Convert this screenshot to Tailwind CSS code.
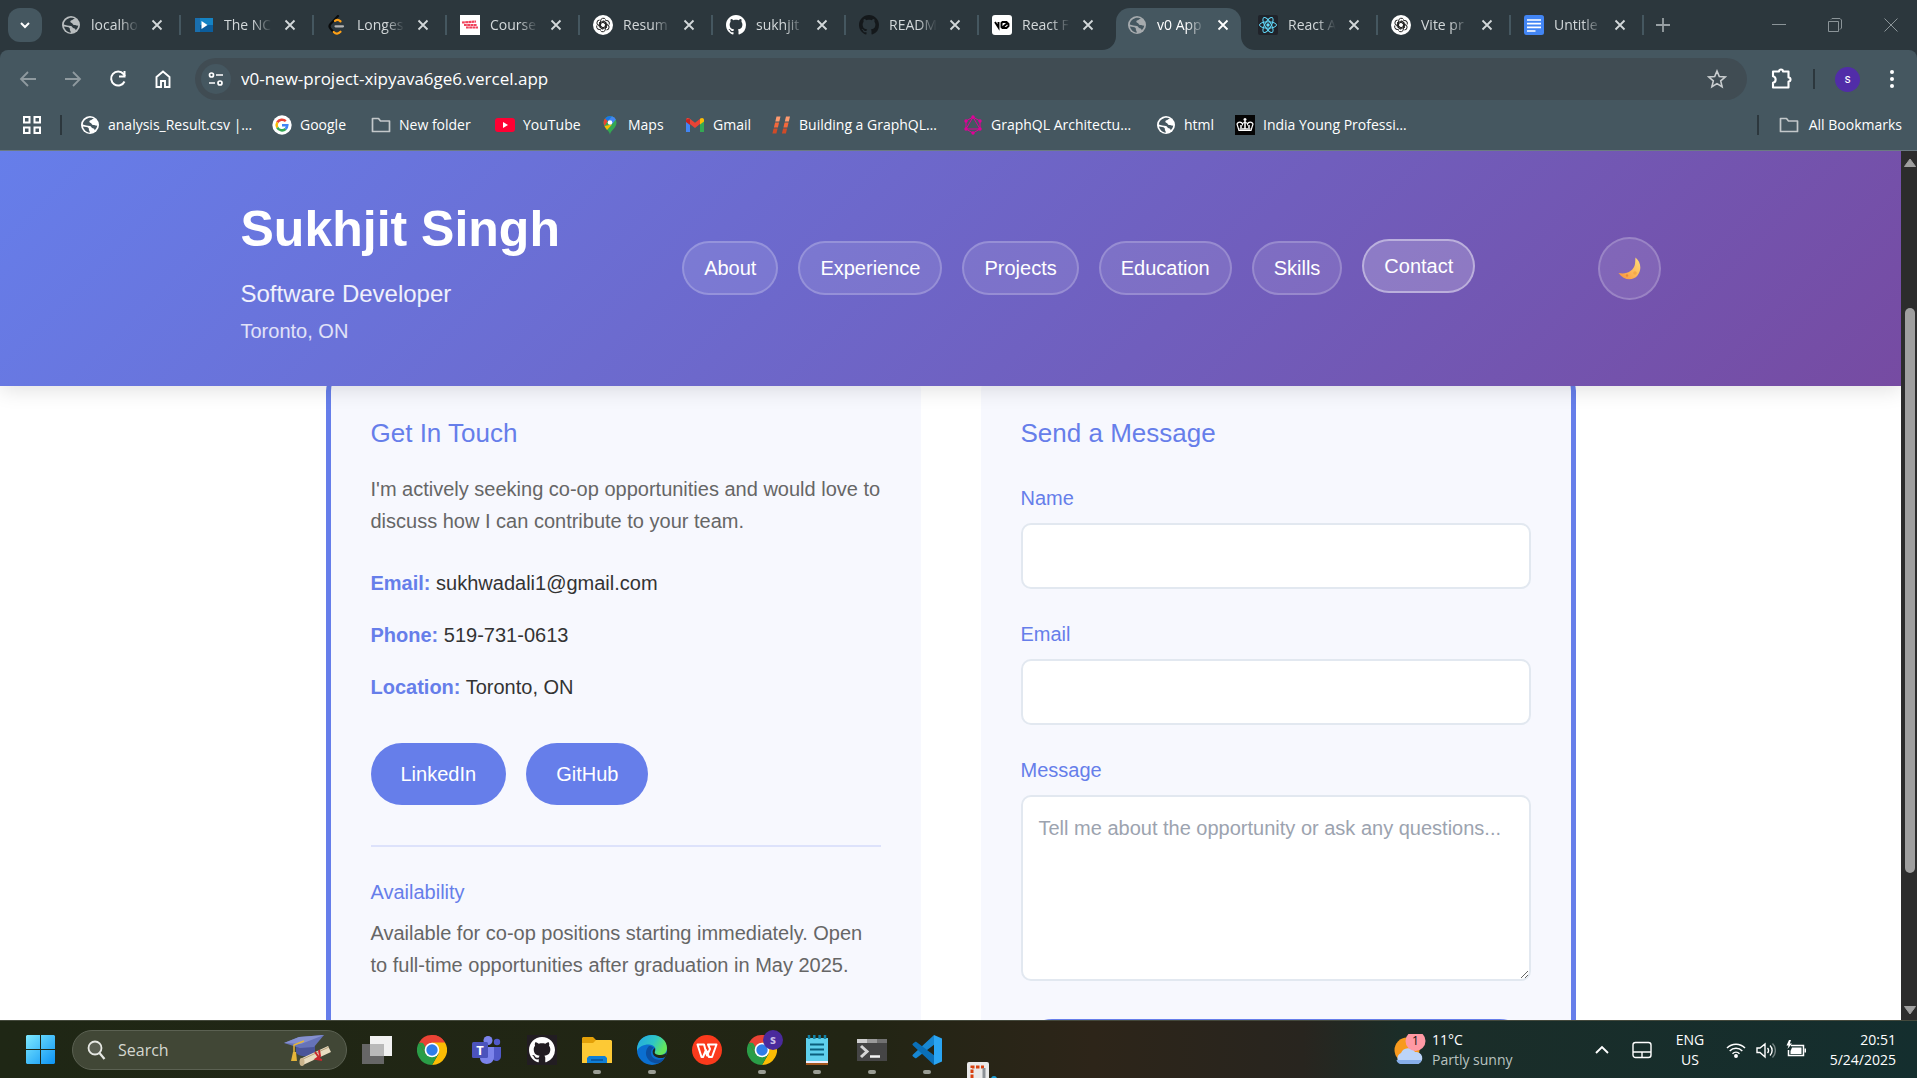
<!DOCTYPE html>
<html lang="en">
<head>
<meta charset="utf-8">
<title>v0 App</title>
<script src="https://cdn.jsdelivr.net/npm/@tailwindcss/browser@4"></script>
</head>
<body class="flex h-screen flex-col overflow-hidden bg-white font-['Liberation_Sans',Arial,sans-serif] text-xl leading-8 text-[#333]">

<svg class="hidden" aria-hidden="true">
  <defs>
    <symbol id="globe" viewBox="0 0 20 20"><circle cx="10" cy="10" r="9" fill="currentColor"/><path d="M8 3.200c1.500-.6 4.500-.5 5.800.5-1.800.2-2 1.300-3.300 1.600-1.600.4-1.400 2-.3 2.400 1.800.6 1.200 2.300 3 2.300 1.700 0 2.200 1 4 .6-.2 2-1.300 3.600-2.500 4.700-.2-1.300-.7-2-2-2.100-1.500-.1-1-2-2.700-2.200-2.200-.2-5.200-.6-7.200-1.500.1-2.900 2-5.200 5.200-6.300z" fill="var(--land)"/><path d="M3 11.500c2 .4 4.500.3 5.500 1.500s-.3 2 1 3l.3 1.700C6.500 17.500 3.600 14.800 3 11.500z" fill="var(--land)"/></symbol>
    <symbol id="github" viewBox="0 0 16 16"><path fill="currentColor" d="M8 0C3.580 0 0 3.580 0 8c0 3.540 2.290 6.530 5.470 7.590.4.070.55-.17.55-.38 0-.19-.01-.82-.01-1.490-2.010.37-2.530-.49-2.690-.94-.09-.23-.48-.94-.82-1.130-.28-.15-.68-.52-.01-.53.63-.01 1.080.58 1.230.82.72 1.210 1.870.87 2.330.66.07-.52.28-.87.51-1.070-1.780-.2-3.640-.89-3.640-3.950 0-.87.31-1.590.82-2.150-.08-.2-.36-1.020.08-2.120 0 0 .67-.21 2.200.82.64-.18 1.320-.27 2-.27s1.360.09 2 .27c1.530-1.040 2.200-.82 2.200-.82.44 1.100.16 1.920.08 2.120.51.56.82 1.270.82 2.150 0 3.070-1.870 3.750-3.650 3.950.29.25.54.73.54 1.480 0 1.070-.01 1.930-.01 2.200 0 .21.15.46.55.38A8.010 8.010 0 0 0 16 8c0-4.420-3.580-8-8-8z"/></symbol>
    <symbol id="openai" viewBox="0 0 20 20"><circle cx="10" cy="10" r="10" fill="#fff"/><g fill="none" stroke="#222" stroke-width="1"><g id="petal"><path d="M7.600 10V5.900a2.700 2.700 0 0 1 5-1.400M7.600 8.600 11 6.600l3.200 1.900"/></g><use href="#petal" transform="rotate(60 10 10)"/><use href="#petal" transform="rotate(120 10 10)"/><use href="#petal" transform="rotate(180 10 10)"/><use href="#petal" transform="rotate(240 10 10)"/><use href="#petal" transform="rotate(300 10 10)"/></g></symbol>
    <symbol id="x" viewBox="0 0 12 12"><path d="M1.500 1.500l9 9M10.500 1.500l-9 9" stroke="currentColor" stroke-width="1.800"/></symbol>
    <symbol id="folder" viewBox="0 0 20 20"><path d="M1.500 3.500h6l2 2.500h9v10.500h-17z" fill="none" stroke="#c3c8ca" stroke-width="1.700" stroke-linejoin="round"/></symbol>
    <symbol id="chrome" viewBox="0 0 30 30"><path d="M15 15 2 7.500A15 15 0 0 1 28 7.500z" fill="#ea4335"/><path d="M15 0A15 15 0 0 1 28 7.500H15z" fill="#ea4335"/><path d="M28 7.500A15 15 0 0 1 15 30l6.500-11.200L15 7.500z" fill="#fbbc04"/><path d="M2 7.500A15 15 0 0 0 15 30l6.500-11.200L15 15l-6.500 3.800z" fill="#2a9d47"/><path d="M2 7.500 8.500 18.800 15 15V7.500z" fill="#ea4335"/><path d="M2 7.500 8.500 18.800 11 16 6 8z" fill="#2a9d47"/><circle cx="15" cy="15" r="7.300" fill="#fff"/><circle cx="15" cy="15" r="5.700" fill="#2f7de9"/></symbol>
  </defs>
</svg>

<!-- Browser chrome -->
<header class="shrink-0 bg-[#2c373d] font-['Open_Sans','Noto_Sans',sans-serif] text-sm text-[#d3d8da]">
  <div class="flex h-[50px] items-end pl-2">
    <button aria-label="Search tabs" class="mr-1.5 mb-2 flex size-[34px] items-center justify-center rounded-xl bg-[#455760] text-white"><svg class="size-3" viewBox="0 0 12 12"><path d="M2 4l4 4 4-4" fill="none" stroke="currentColor" stroke-width="2"/></svg></button>
    <nav aria-label="Open tabs" class="flex">
      <div class="flex h-[42px] w-[133px] items-center pb-2 pl-[13px]"><svg class="size-5 shrink-0 text-[#b9bdbf] [--land:#2c373d]"><use href="#globe"/></svg><a href="#" class="ml-2.5 w-12 whitespace-nowrap [mask-image:linear-gradient(to_right,#000_60%,transparent)]">localho</a><button aria-label="Close tab" class="ml-3"><svg class="size-3"><use href="#x"/></svg></button><span class="ml-auto h-5 w-0.5 bg-[#455760]"></span></div>
      <div class="flex h-[42px] w-[133px] items-center pb-2 pl-[13px]"><svg class="size-5 shrink-0" viewBox="0 0 20 20"><path d="M1 3h18v14H1z" fill="#1583c4"/><path d="M1 10h18v7H1z" fill="#0b5d9c"/><path d="M1 3h5v14H1z" fill="#1a6fae"/><path d="M7.500 6v8l6-4z" fill="#fff"/></svg><a href="#" class="ml-2.5 w-12 whitespace-nowrap [mask-image:linear-gradient(to_right,#000_60%,transparent)]">The NC</a><button aria-label="Close tab" class="ml-3"><svg class="size-3"><use href="#x"/></svg></button><span class="ml-auto h-5 w-0.5 bg-[#455760]"></span></div>
      <div class="flex h-[42px] w-[133px] items-center pb-2 pl-[13px]"><svg class="size-5 shrink-0" viewBox="0 0 20 20" fill="none" stroke-width="2.200" stroke-linecap="round"><path d="M11 1 3.500 9c-1.300 1.400-1.200 3.200 0 4.600L6.500 17" stroke="#090b0c"/><path d="M6.700 17c2.300 2.300 4.600 2 6.800-.3M8 5.800c1.900-1.400 3.700-1.200 5.500.6" stroke="#ffa116"/><path d="M8.500 11.300H16" stroke="#b3b3b3"/></svg><a href="#" class="ml-2.5 w-12 whitespace-nowrap [mask-image:linear-gradient(to_right,#000_60%,transparent)]">Longes</a><button aria-label="Close tab" class="ml-3"><svg class="size-3"><use href="#x"/></svg></button><span class="ml-auto h-5 w-0.5 bg-[#455760]"></span></div>
      <div class="flex h-[42px] w-[133px] items-center pb-2 pl-[13px]"><svg class="size-5 shrink-0" viewBox="0 0 20 20"><path d="M0 0h20v20H0z" fill="#fff"/><path d="M2 7.500l14-1M4 10h13M6 12.500h12" stroke="#f0435c" stroke-width="2.200" stroke-dasharray="2.800 .4"/></svg><a href="#" class="ml-2.5 w-12 whitespace-nowrap [mask-image:linear-gradient(to_right,#000_60%,transparent)]">Course</a><button aria-label="Close tab" class="ml-3"><svg class="size-3"><use href="#x"/></svg></button><span class="ml-auto h-5 w-0.5 bg-[#455760]"></span></div>
      <div class="flex h-[42px] w-[133px] items-center pb-2 pl-[13px]"><svg class="size-5 shrink-0"><use href="#openai"/></svg><a href="#" class="ml-2.5 w-12 whitespace-nowrap [mask-image:linear-gradient(to_right,#000_60%,transparent)]">Resum</a><button aria-label="Close tab" class="ml-3"><svg class="size-3"><use href="#x"/></svg></button><span class="ml-auto h-5 w-0.5 bg-[#455760]"></span></div>
      <div class="flex h-[42px] w-[133px] items-center pb-2 pl-[13px]"><svg class="size-5 shrink-0 text-white"><use href="#github"/></svg><a href="#" class="ml-2.5 w-12 whitespace-nowrap [mask-image:linear-gradient(to_right,#000_60%,transparent)]">sukhjit</a><button aria-label="Close tab" class="ml-3"><svg class="size-3"><use href="#x"/></svg></button><span class="ml-auto h-5 w-0.5 bg-[#455760]"></span></div>
      <div class="flex h-[42px] w-[133px] items-center pb-2 pl-[13px]"><svg class="size-5 shrink-0 text-[#14181b]"><use href="#github"/></svg><a href="#" class="ml-2.5 w-12 whitespace-nowrap [mask-image:linear-gradient(to_right,#000_60%,transparent)]">READM</a><button aria-label="Close tab" class="ml-3"><svg class="size-3"><use href="#x"/></svg></button><span class="ml-auto h-5 w-0.5 bg-[#455760]"></span></div>
      <div class="flex h-[42px] w-[133px] items-center pb-2 pl-[13px]"><svg class="size-5 shrink-0" viewBox="0 0 20 20"><rect width="20" height="20" rx="3" fill="#fff"/><path d="M3 7l3.500 5.500V7M10.500 7h4l2 2v2l-2 2h-4l-1-1V8zM10.500 12.500 16 7.500" fill="none" stroke="#000" stroke-width="1.900"/></svg><a href="#" class="ml-2.5 w-12 whitespace-nowrap [mask-image:linear-gradient(to_right,#000_60%,transparent)]">React F</a><button aria-label="Close tab" class="ml-3"><svg class="size-3"><use href="#x"/></svg></button></div>
      <div class="relative mr-1 ml-1 flex h-[42px] w-[125px] items-center rounded-t-[14px] bg-[#455760] pb-2 pl-[11px] text-white"><svg class="absolute bottom-0 -left-3.5 size-3.5" viewBox="0 0 14 14"><path d="M14 0v14H0C8 14 14 8 14 0z" fill="#455760"/></svg><svg class="absolute -right-3.5 bottom-0 size-3.5" viewBox="0 0 14 14"><path d="M0 0v14h14C6 14 0 8 0 0z" fill="#455760"/></svg><svg class="size-5 shrink-0 text-[#a6abae] [--land:#455760]"><use href="#globe"/></svg><a href="#" class="ml-2.5 w-12 whitespace-nowrap [mask-image:linear-gradient(to_right,#000_60%,transparent)]">v0 App</a><button aria-label="Close tab" class="ml-3"><svg class="size-3"><use href="#x"/></svg></button></div>
      <div class="flex h-[42px] w-[133px] items-center pb-2 pl-[13px]"><svg class="size-5 shrink-0" viewBox="0 0 20 20"><rect width="20" height="20" rx="2" fill="#20232a"/><g fill="none" stroke="#61dafb" stroke-width="1"><ellipse cx="10" cy="10" rx="8.500" ry="3.200"/><ellipse cx="10" cy="10" rx="8.500" ry="3.200" transform="rotate(60 10 10)"/><ellipse cx="10" cy="10" rx="8.500" ry="3.200" transform="rotate(120 10 10)"/></g><circle cx="10" cy="10" r="1.700" fill="#61dafb"/></svg><a href="#" class="ml-2.5 w-12 whitespace-nowrap [mask-image:linear-gradient(to_right,#000_60%,transparent)]">React A</a><button aria-label="Close tab" class="ml-3"><svg class="size-3"><use href="#x"/></svg></button><span class="ml-auto h-5 w-0.5 bg-[#455760]"></span></div>
      <div class="flex h-[42px] w-[133px] items-center pb-2 pl-[13px]"><svg class="size-5 shrink-0"><use href="#openai"/></svg><a href="#" class="ml-2.5 w-12 whitespace-nowrap [mask-image:linear-gradient(to_right,#000_60%,transparent)]">Vite pr</a><button aria-label="Close tab" class="ml-3"><svg class="size-3"><use href="#x"/></svg></button><span class="ml-auto h-5 w-0.5 bg-[#455760]"></span></div>
      <div class="flex h-[42px] w-[133px] items-center pb-2 pl-[13px]"><svg class="size-5 shrink-0" viewBox="0 0 20 20"><rect width="20" height="20" rx="2.500" fill="#4285f4"/><path d="M3 5h14M3 8.700h14M3 12.300h14M3 16h8.500" stroke="#fff" stroke-width="1.700"/></svg><a href="#" class="ml-2.5 w-12 whitespace-nowrap [mask-image:linear-gradient(to_right,#000_60%,transparent)]">Untitle</a><button aria-label="Close tab" class="ml-3"><svg class="size-3"><use href="#x"/></svg></button><span class="ml-auto h-5 w-0.5 bg-[#455760]"></span></div>
    </nav>
    <button aria-label="New tab" class="mb-[18px] ml-3 text-[#98a0a4]"><svg class="size-3.5" viewBox="0 0 14 14"><path d="M7 0v14M0 7h14" stroke="currentColor" stroke-width="1.800"/></svg></button>
    <div class="mb-[18px] ml-auto flex items-center gap-[42px] pr-[19px] text-[#8b9498]">
      <button aria-label="Minimise"><svg class="size-3.5" viewBox="0 0 14 14"><path d="M0 6.500h14" stroke="currentColor"/></svg></button>
      <button aria-label="Restore"><svg class="size-3.5" viewBox="0 0 14 14"><path d="M.5 3.500h10v10H.5zM3 1.500 4 .5h8l1.500 1.500v8l-1.500 1.500" fill="none" stroke="currentColor"/></svg></button>
      <button aria-label="Close window"><svg class="size-3.5" viewBox="0 0 14 14"><path d="M.5.5l13 13M13.500.5l-13 13" stroke="currentColor"/></svg></button>
    </div>
  </div>

  <div class="h-[101px] rounded-t-lg border-b border-[#6b7a82] bg-[#455760] pt-2 text-white">
    <div class="flex h-[42px] items-center">
      <div class="flex w-[195px] shrink-0 items-center gap-[25px] pl-[18px]">
        <button aria-label="Back" class="text-[#8f9a9f]"><svg class="size-5" viewBox="0 0 20 20"><path d="M18 10H3M10 3l-7 7 7 7" fill="none" stroke="currentColor" stroke-width="1.800"/></svg></button>
        <button aria-label="Forward" class="text-[#8f9a9f]"><svg class="size-5" viewBox="0 0 20 20"><path d="M2 10h15M10 3l7 7-7 7" fill="none" stroke="currentColor" stroke-width="1.800"/></svg></button>
        <button aria-label="Reload"><svg class="size-5" viewBox="0 0 20 20"><path d="M16.500 12.500A7 7 0 1 1 15.500 5L17 7" fill="none" stroke="currentColor" stroke-width="2"/><path d="M17.500 2v6.500H11V6.500h4.500V2z" fill="currentColor"/></svg></button>
        <button aria-label="Home"><svg class="size-5" viewBox="0 0 20 20"><path d="M3.500 18V8L10 2.500 16.500 8v10H12v-6H8v6z" fill="none" stroke="currentColor" stroke-width="1.900"/></svg></button>
      </div>
      <div class="flex h-[42px] flex-1 items-center rounded-full bg-[#404c53] pr-5 pl-1.5">
        <button aria-label="Site information" class="flex size-[30px] items-center justify-center rounded-full bg-[#455760]"><svg class="size-4" viewBox="0 0 16 16" fill="none" stroke="currentColor" stroke-width="1.700"><circle cx="3.500" cy="4" r="2"/><path d="M8 4h7M1 12h6"/><circle cx="12" cy="12" r="2"/></svg></button>
        <input aria-label="Address" value="v0-new-project-xipyava6ge6.vercel.app" class="ml-2.5 flex-1 bg-transparent text-[17px] outline-none">
        <button aria-label="Bookmark this page" class="text-[#c9cdcf]"><svg class="size-5" viewBox="0 0 20 20"><path d="M10 2l2.300 5.500 5.900.5-4.500 3.900 1.400 5.800L10 14.600l-5.100 3.100 1.400-5.800L1.800 8l5.900-.5z" fill="none" stroke="currentColor" stroke-width="1.600"/></svg></button>
      </div>
      <div class="flex w-[170px] shrink-0 items-center pl-6">
        <button aria-label="Extensions"><svg class="size-[22px]" viewBox="0 0 22 22"><path d="M2 3.500h6a2 2 0 0 1 4 0h5.500v6a2 2 0 0 1 0 4v6H2v-4.700c3.500-.6 3.500-6 0-6.600z" fill="none" stroke="currentColor" stroke-width="2.100" stroke-linejoin="round"/></svg></button>
        <span class="ml-5 h-5 w-0.5 bg-[#2c373d]"></span>
        <button aria-label="Profile" class="ml-5 flex size-[25px] items-center justify-center rounded-full bg-[#512da8] font-[Roboto,sans-serif] text-xs">s</button>
        <button aria-label="Menu" class="ml-[22px]"><svg class="size-5" viewBox="0 0 20 20" fill="currentColor"><circle cx="10" cy="3" r="2"/><circle cx="10" cy="10" r="2"/><circle cx="10" cy="17" r="2"/></svg></button>
      </div>
    </div>

    <nav aria-label="Bookmarks" class="flex h-[50px] items-center pr-[15px] pl-[22px] whitespace-nowrap">
      <button aria-label="Apps"><svg class="size-5" viewBox="0 0 20 20" fill="none" stroke="currentColor" stroke-width="2"><path d="M2 2h5.500v5.500H2zM12.500 2H18v5.500h-5.500zM2 12.500h5.500V18H2zM12.500 12.500H18V18h-5.500z"/></svg></button>
      <span class="mr-[18px] ml-[18px] h-5 w-0.5 bg-[#2c373d]"></span>
      <a href="#" class="flex w-48 items-center gap-2"><svg class="size-5 [--land:#455760]"><use href="#globe"/></svg>analysis_Result.csv |…</a>
      <a href="#" class="flex w-[99px] items-center gap-2"><svg class="size-5" viewBox="0 0 20 20"><circle cx="10" cy="10" r="9.700" fill="#fff"/><g fill="none" stroke-width="2.500"><path d="M5.300 7.400A5.400 5.400 0 0 1 13.800 6.200" stroke="#ea4335"/><path d="M5.300 12.600a5.400 5.400 0 0 1 0-5.200" stroke="#fbbc05"/><path d="M13.600 14A5.400 5.400 0 0 1 5.300 12.600" stroke="#34a853"/><path d="M10 10.300h5.300a5.400 5.400 0 0 1-1.700 3.700" stroke="#4285f4"/></g></svg>Google</a>
      <a href="#" class="flex w-[124px] items-center gap-2"><svg class="size-5"><use href="#folder"/></svg>New folder</a>
      <a href="#" class="flex w-[105px] items-center gap-2"><svg class="size-5" viewBox="0 0 20 20"><rect y="3" width="20" height="14" rx="3" fill="#f03"/><path d="M8 7v6l5-3z" fill="#fff"/></svg>YouTube</a>
      <a href="#" class="flex w-[85px] items-center gap-2"><svg class="size-5" viewBox="0 0 20 20"><path d="M10 20c0-4.500-6.500-6.500-6.500-12.500A6.500 6.500 0 0 1 10 1a6.500 6.500 0 0 1 6.500 6.500C16.500 13.500 10 15.500 10 20z" fill="#34a853"/><path d="M5 3.500A6.500 6.500 0 0 1 12 1.300L7.700 6.200z" fill="#1a73e8"/><path d="M12 1.300a6.500 6.500 0 0 1 3.900 3.200l-4 4.700L7.700 6.200z" fill="#4285f4"/><path d="M5 3.500 7.700 6.200 4.500 11A7 7 0 0 1 5 3.500z" fill="#ea4335"/><path d="M4.500 11 12 9.500 7 15c-1-1.200-2-2.500-2.500-4z" fill="#fbbc04"/><circle cx="10" cy="7.500" r="2.300" fill="#fff"/></svg>Maps</a>
      <a href="#" class="flex w-[86px] items-center gap-2"><svg class="size-5" viewBox="0 0 20 20"><path d="M1 4v13h4V9z" fill="#4285f4"/><path d="M19 4v13h-4V9z" fill="#34a853"/><path d="M1 4.500C1 3 3 2.300 4.500 3.500L10 7.800l5.500-4.300v5L10 13 1 6z" fill="#ea4335"/><path d="M15 3.800C17 2.300 19 3 19 5v1.500L15 9.500z" fill="#fbbc04"/><path d="M1 4.500V7l4 3V4z" fill="#c5221f"/></svg>Gmail</a>
      <a href="#" class="flex w-48 items-center gap-2"><svg class="size-5" viewBox="0 0 20 20"><path d="M5.500 1.500h4L8.300 6.500h-4zM15 1.500h4l-1.200 5h-4z" fill="#ff9a6f"/><path d="M4.100 7.500h4L6.900 12.500h-4zM13.600 7.500h4l-1.200 5h-4z" fill="#f4683a"/><path d="M2.600 13.500h4L5.400 18.500h-4zM12.100 13.500h4l-1.200 5h-4z" fill="#cf4b28"/></svg>Building a GraphQL…</a>
      <a href="#" class="flex w-[193px] items-center gap-2"><svg class="size-5" viewBox="0 0 20 20"><path d="M10 2l7 4v8l-7 4-7-4V6zM10 2l7 12H3z" fill="none" stroke="#e10098" stroke-width="1"/><g fill="#e10098"><circle cx="10" cy="2" r="1.700"/><circle cx="17" cy="6" r="1.700"/><circle cx="17" cy="14" r="1.700"/><circle cx="10" cy="18" r="1.700"/><circle cx="3" cy="14" r="1.700"/><circle cx="3" cy="6" r="1.700"/></g></svg>GraphQL Architectu…</a>
      <a href="#" class="flex w-[79px] items-center gap-2"><svg class="size-5 [--land:#455760]"><use href="#globe"/></svg>html</a>
      <a href="#" class="flex items-center gap-2"><svg class="size-5" viewBox="0 0 20 20"><path d="M0 0h20v20H0z" fill="#050505"/><path d="M4 15.500 2 9c1-2.500 4.500-2.500 5.500 0 .3-2 4.700-2 5 0 1-2.500 4.500-2.500 5.500 0l-2 6.500z" fill="none" stroke="#fff" stroke-width="1.200"/><path d="M4.500 14h11M10 3v11M8.500 4.500h3M6 10v3M14 10v3" stroke="#fff" stroke-width="1.500"/></svg>India Young Professi…</a>
      <span class="mr-5 ml-auto h-5 w-0.5 bg-[#2c373d]"></span>
      <a href="#" class="flex items-center gap-2.5"><svg class="size-5"><use href="#folder"/></svg>All Bookmarks</a>
    </nav>
  </div>
</header>

<!-- Page viewport -->
<div class="flex min-h-0 flex-1">
  <div class="flex min-w-0 flex-1 flex-col overflow-hidden bg-white">
    <header class="relative z-10 shrink-0 bg-[linear-gradient(135deg,#667eea_0%,#764ba2_100%)] text-white shadow-[0_4px_20px_rgba(0,0,0,0.12)]">
      <div class="mx-auto flex max-w-[1500px] items-center justify-between px-10 pt-[38px] pb-[39px]">
        <div>
          <h1 class="mb-1.5 text-[50px] leading-[80px] font-bold">Sukhjit Singh</h1>
          <p class="mb-0.5 text-2xl leading-[38px] text-white/90">Software Developer</p>
          <p class="text-white/80">Toronto, ON</p>
        </div>
        <nav aria-label="Sections" class="flex gap-5">
          <a href="#about" class="rounded-full border-2 border-white/20 bg-white/10 px-5 py-[9px]">About</a>
          <a href="#experience" class="rounded-full border-2 border-white/20 bg-white/10 px-5 py-[9px]">Experience</a>
          <a href="#projects" class="rounded-full border-2 border-white/20 bg-white/10 px-5 py-[9px]">Projects</a>
          <a href="#education" class="rounded-full border-2 border-white/20 bg-white/10 px-5 py-[9px]">Education</a>
          <a href="#skills" class="rounded-full border-2 border-white/20 bg-white/10 px-5 py-[9px]">Skills</a>
          <a href="#contact" class="-translate-y-0.5 rounded-full border-2 border-white/40 bg-white/20 px-5 py-[9px]">Contact</a>
        </nav>
        <button aria-label="Toggle dark mode" class="flex size-[63px] items-center justify-center rounded-full border-2 border-white/20 bg-white/10"><svg class="size-6" viewBox="0 0 24 24"><defs><linearGradient id="moon" x1="0" y1="1" x2="1" y2="0"><stop offset="0" stop-color="#f9913a"/><stop offset="1" stop-color="#ffe07a"/></linearGradient></defs><path d="M18.500 1.500C24 6 25 14 20.500 19.500S7 25 1.500 17c8 2 15.500-2.500 16.500-9 .4-2.500.2-4.500.5-6.500z" fill="url(#moon)"/><circle cx="18" cy="17" r="1.800" fill="#f3a847"/><circle cx="10" cy="19.500" r="1.200" fill="#ed8b35"/></svg></button>
      </div>
    </header>

    <main id="contact" class="mx-auto -mt-3.5 grid w-full max-w-[1250px] flex-1 grid-cols-2 gap-[60px]">
      <section class="h-[800px] rounded-[19px] border-l-[5px] border-[#667eea] bg-[#f7f8fe] p-10">
        <h2 class="text-[26px] leading-[42px] text-[#667eea]">Get In Touch</h2>
        <p class="mt-[19px] text-[#666]">I'm actively seeking co-op opportunities and would love to discuss how I can contribute to your team.</p>
        <div class="mt-[30px] flex flex-col gap-5">
          <p><strong class="text-[#667eea]">Email:</strong> sukhwadali1@gmail.com</p>
          <p><strong class="text-[#667eea]">Phone:</strong> 519-731-0613</p>
          <p><strong class="text-[#667eea]">Location:</strong> Toronto, ON</p>
        </div>
        <div class="mt-10 flex gap-5 text-white">
          <a href="#" class="rounded-full bg-[#667eea] px-[30px] py-[15px]">LinkedIn</a>
          <a href="#" class="rounded-full bg-[#667eea] px-[30px] py-[15px]">GitHub</a>
        </div>
        <div class="mt-10 border-t-2 border-[#dde2fb] pt-[29px]">
          <h3 class="text-[#667eea]">Availability</h3>
          <p class="mt-[9px] text-[#666]">Available for co-op positions starting immediately. Open to full-time opportunities after graduation in May 2025.</p>
        </div>
      </section>

      <section class="h-[800px] rounded-[19px] border-r-[5px] border-[#667eea] bg-[#f7f8fe] p-10">
        <h2 class="text-[26px] leading-[42px] text-[#667eea]">Send a Message</h2>
        <form class="mt-7 flex flex-col gap-[29px]">
          <div class="flex flex-col gap-[9px]">
            <label for="name" class="text-[#667eea]">Name</label>
            <input id="name" type="text" class="h-[66px] rounded-[10px] border-2 border-[#e2e8f0] bg-white px-4">
          </div>
          <div class="flex flex-col gap-[9px]">
            <label for="email" class="text-[#667eea]">Email</label>
            <input id="email" type="email" class="h-[66px] rounded-[10px] border-2 border-[#e2e8f0] bg-white px-4">
          </div>
          <div class="flex flex-col gap-[9px]">
            <label for="message" class="text-[#667eea]">Message</label>
            <textarea id="message" placeholder="Tell me about the opportunity or ask any questions..." class="h-[186px] resize-y rounded-[10px] border-2 border-[#e2e8f0] bg-white px-4 py-[15px] placeholder:text-[#9ca3af]"></textarea>
          </div>
          <button type="button" class="mt-[9px] rounded-full bg-[#667eea] px-[30px] py-[15px] text-white">Send Message</button>
        </form>
      </section>
    </main>
  </div>

  <div class="flex w-4 shrink-0 flex-col items-center bg-[#2c2c2c] pt-1.5 pb-1 pl-0.5 text-[#9f9f9f]" aria-hidden="true">
    <svg class="h-3 w-3.5 shrink-0" viewBox="0 0 14 12"><path d="M7 2 12.500 9.500h-11z" fill="currentColor" stroke="currentColor" stroke-linejoin="round"/></svg>
    <span class="grow-[139]"></span>
    <span class="w-2.5 grow-[565] rounded-full bg-[#9f9f9f]"></span>
    <span class="grow-[131]"></span>
    <svg class="h-3 w-3.5 shrink-0" viewBox="0 0 14 12"><path d="M7 10 1.500 2.500h11z" fill="currentColor" stroke="currentColor" stroke-linejoin="round"/></svg>
  </div>
</div>

<!-- Windows taskbar -->
<footer class="flex h-[58px] shrink-0 items-center overflow-hidden border-t border-[#44493c] bg-[linear-gradient(to_right,#1f2715_0%,#222514_45%,#2d2519_57%,#28251f_68%,#1b2d28_73%,#142e2e_100%)] pr-[21px] pl-[26px] font-['Open_Sans','Noto_Sans',sans-serif] text-sm leading-5 text-white">
  <button aria-label="Start"><svg class="size-[29px]" viewBox="0 0 29 29"><defs><linearGradient id="win" x1="0" y1="0" x2="1" y2="1"><stop offset="0" stop-color="#7eeaff"/><stop offset="1" stop-color="#0c93f5"/></linearGradient></defs><path d="M0 1 1 0h13v14H0zM15 0h13l1 1v13H15zM0 15h14v14H1l-1-1zM15 15h14v13l-1 1H15z" fill="url(#win)"/></svg></button>
  <div class="ml-[17px] flex h-10 w-[275px] items-center rounded-full border border-[#5b6152] bg-[#414736] pr-3.5 pl-3.5">
    <svg class="size-5 shrink-0" viewBox="0 0 20 20"><circle cx="8" cy="8" r="6.500" fill="#5a5f52" stroke="#e6e8e3" stroke-width="1.800"/><path d="M12.500 13l5 6" stroke="#e6e8e3" stroke-width="2.200"/></svg>
    <input type="search" aria-label="Search" placeholder="Search" class="ml-[11px] w-0 flex-1 bg-transparent text-base outline-none placeholder:text-[#d4d7d0]">
    <svg class="h-9 w-12 shrink-0" viewBox="0 0 48 36"><path d="M12 12v9c5 5 15 4 19-1v-9z" fill="#4a5599"/><path d="M0 11 15 5l25-2-10 12-14 1z" fill="#6673b8"/><path d="M0 11l15-6 25-2-23 9z" fill="#8590cf"/><path d="M20 9 10 13v14" fill="none" stroke="#e4b43a" stroke-width="1.500"/><path d="M9 20h3l1 9H7z" fill="#e4b43a"/><path d="M16 27 44 14l3 6-28 13z" fill="#e8dcc0"/><path d="M17 28 45 15" stroke="#b8a37d"/><ellipse cx="18" cy="30" rx="2.500" ry="4" fill="#c9b48c"/><path d="M31 20l5 7M35 18l1 6-4 3 6 1" fill="none" stroke="#c8272d" stroke-width="2"/></svg>
  </div>
  <nav aria-label="Pinned apps" class="ml-[15px] flex self-stretch">
    <button aria-label="Task view" class="relative flex w-[55px] items-center"><svg class="size-[30px]" viewBox="0 0 30 30"><path d="M8 1h22v20H8z" fill="#f1f1f1"/><path d="M0 9h22v20H0z" fill="#666"/><path d="M8 9h14v12H8z" fill="#b9b9b9"/></svg></button>
    <button aria-label="Chrome" class="relative flex w-[55px] items-center"><svg class="size-[30px]"><use href="#chrome"/></svg></button>
    <button aria-label="Teams" class="relative flex w-[55px] items-center"><svg class="size-[30px]" viewBox="0 0 30 30"><circle cx="16" cy="5.500" r="4.500" fill="#7b83eb"/><circle cx="25" cy="7" r="3.200" fill="#5059c9"/><path d="M20 12h9v9c0 6-8 7-9 1z" fill="#5059c9"/><path d="M8 12h14v10c0 9-14 9-14 1z" fill="#7b83eb"/><rect y="7" width="16" height="16" rx="1.500" fill="#4b53bc"/><text x="8" y="20" text-anchor="middle" font-family="Open Sans" font-size="13" font-weight="700" fill="#fff">T</text></svg></button>
    <button aria-label="GitHub" class="relative flex w-[55px] items-center"><span class="flex size-[30px] items-center justify-center bg-[#221d22]"><svg class="size-[26px] text-white"><use href="#github"/></svg></span></button>
    <button aria-label="File Explorer" class="relative flex w-[55px] items-center"><svg class="size-[30px]" viewBox="0 0 30 30"><path d="M0 3 1 2h10l3 3v5H0z" fill="#e3a008"/><path d="M0 8h11l3-3h15l1 1v22H0z" fill="#fdc935"/><path d="M5 28v-5l2-2h16l2 2v5z" fill="#0f7fd6"/><path d="M9 25h12" stroke="#0a4f94" stroke-width="1.500"/></svg><span class="absolute bottom-1 left-[11px] h-1 w-2 rounded-full bg-[#9a9d94]"></span></button>
    <button aria-label="Edge" class="relative flex w-[55px] items-center"><svg class="size-[30px]" viewBox="0 0 30 30"><defs><linearGradient id="edge" x1="0" y1="0" x2="1" y2=".4"><stop offset="0" stop-color="#22a5e6"/><stop offset=".6" stop-color="#2fc6c4"/><stop offset="1" stop-color="#63e65d"/></linearGradient></defs><circle cx="15" cy="15" r="15" fill="#0b6fd0"/><path d="M0 13C1 5 7 0 15 0c9 0 15 6 15 13 0 5-4 8-9 7-3-.5-4-2-3-3.500 2-3-1-7-6-7C6 9.500 1.500 12 0 16z" fill="url(#edge)"/><path d="M12 11c-6 6-3 17 9 17.500 3-1 5-3 6-5-5 2.500-13 1-13-6 0-3 1.500-4 3-4.500-1.500-1.500-3-2-5-2z" fill="#0c4fa0"/><path d="M18 13c-4 2-3 9 4 10 4 .5 6-1 6.500-1l1.500-5c-1.500 2-4 3.500-8 3-4-.5-5-2-4-4z" fill="#222615"/></svg><span class="absolute bottom-1 left-[11px] h-1 w-2 rounded-full bg-[#9a9d94]"></span></button>
    <button aria-label="WPS Office" class="relative flex w-[55px] items-center"><svg class="size-[30px]" viewBox="0 0 30 30"><circle cx="15" cy="15" r="15" fill="#fb3a1c"/><path d="M5.500 9.500H12l3 11 3-6.500-2-4.500h8.500L20 22h-3l-3-7-3 7H9.500z" fill="none" stroke="#fff" stroke-width="2" stroke-linejoin="round"/></svg></button>
    <button aria-label="Chrome, profile s" class="relative flex w-[55px] items-center"><svg class="size-[30px]"><use href="#chrome"/></svg><span class="absolute top-[9px] left-4 flex size-5 items-center justify-center rounded-full bg-[#4a2a9c] text-xs font-bold text-[#c9bfe6]">s</span><span class="absolute bottom-1 left-[11px] h-1 w-2 rounded-full bg-[#9a9d94]"></span></button>
    <button aria-label="Notepad" class="relative flex w-[55px] items-center"><svg class="size-[30px]" viewBox="0 0 30 30"><path d="M4 26h22v4H4z" fill="#a5581f"/><path d="M4 3h22v24H4z" fill="#5ed0ec"/><path d="M4 26h22v2H4z" fill="#eef"/><path d="M8 9.500h14M8 14.500h14M8 19.500h14" stroke="#0b5e7c" stroke-width="1.800"/><path d="M7 0v4M12.300 0v4M17.600 0v4M23 0v4" stroke="#1283a8" stroke-width="2.500"/></svg><span class="absolute bottom-1 left-[11px] h-1 w-2 rounded-full bg-[#9a9d94]"></span></button>
    <button aria-label="Terminal" class="relative flex w-[55px] items-center"><svg class="size-[30px]" viewBox="0 0 30 30"><path d="M0 4h30v22H0z" fill="#454545"/><path d="M0 4h10v4H0z" fill="#cfcfcf"/><path d="M10 4h10v4H10z" fill="#9a9a9a"/><path d="M20 4h10v4H20z" fill="#717171"/><path d="M4 11l6 5.500L4 22" fill="none" stroke="#d6d6d6" stroke-width="3"/><path d="M13 21.500h10" stroke="#f4f4f4" stroke-width="2.500"/></svg><span class="absolute bottom-1 left-[11px] h-1 w-2 rounded-full bg-[#9a9d94]"></span></button>
    <button aria-label="Visual Studio Code" class="relative flex w-[55px] items-center"><svg class="size-[30px]" viewBox="0 0 30 30"><path d="M22 0 1 19.500c-1 1-.5 1.500 0 2l2 1.500c.5.500 1 .3 1.500 0L23 9z" fill="#1787d2"/><path d="M22 30 1 10.500c-1-1-.5-1.500 0-2L3 7c.5-.5 1-.3 1.500 0L23 21z" fill="#0a6fb8"/><path d="M22 0l8 3.500v23L22 30z" fill="#2aa5f3"/></svg><span class="absolute bottom-1 left-[11px] h-1 w-2 rounded-full bg-[#9a9d94]"></span></button>
    <button aria-label="Snipping Tool" class="relative flex w-[55px] items-end"><svg class="h-4 w-[30px]" viewBox="0 0 30 16"><rect x="0" width="22" height="22" rx="2" fill="#e9e9e9"/><path d="M5 16V5h12" fill="none" stroke="#d8400f" stroke-width="3" stroke-dasharray="3.500 1.500"/><path d="M17 6v12" stroke="#8c9196" stroke-width="3"/><circle cx="27" cy="17" r="3" fill="#1b9fd8"/></svg></button>
  </nav>
  <button class="ml-auto flex w-[200px] items-center gap-1.5 text-left"><svg class="size-8" viewBox="0 0 32 32"><circle cx="13" cy="16" r="12.500" fill="#f79a1e"/><path d="M7 30a6 6 0 0 1 0-11 8 8 0 0 1 14-1 6.200 6.200 0 0 1 3 12z" fill="#bcd4f8"/><path d="M7 30a5 5 0 0 1-4.500-4h25a5 5 0 0 1-4.500 4z" fill="#86aeea"/><circle cx="21.500" cy="7" r="10" fill="#ff99a4"/><text x="21.500" y="11" text-anchor="middle" font-family="Open Sans" font-size="12" fill="#111">1</text></svg><span>11°C<br><span class="text-[#b9c3c0]">Partly sunny</span></span></button>
  <button aria-label="Show hidden icons"><svg class="size-4" viewBox="0 0 16 16"><path d="M2 11l6-6 6 6" fill="none" stroke="currentColor" stroke-width="1.900"/></svg></button>
  <button aria-label="Touchpad" class="ml-[22px]"><svg class="size-5" viewBox="0 0 20 20" fill="none" stroke="currentColor" stroke-width="1.400"><rect x="1" y="2.500" width="18" height="15" rx="2.500"/><path d="M1 12h18M10 12v5"/></svg></button>
  <button class="ml-2.5 w-14 text-center">ENG<br>US</button>
  <button aria-label="Network, volume and battery" class="ml-2 flex gap-2.5">
    <svg class="size-5" viewBox="0 0 20 20" fill="none" stroke="currentColor" stroke-width="1.500"><path d="M1 8a12.500 12.500 0 0 1 18 0M3.700 11a8.800 8.800 0 0 1 12.600 0M6.500 13.700a5 5 0 0 1 7 0"/><circle cx="10" cy="16" r="1.200" fill="currentColor"/></svg>
    <svg class="size-5" viewBox="0 0 20 20" fill="none" stroke="currentColor" stroke-width="1.400"><path d="M1 8h3l5-4v13l-5-4.500H1zM11.500 8a3.500 3.500 0 0 1 0 5M14 5.500a7 7 0 0 1 0 10"/><path d="M16.500 3.500a10 10 0 0 1 0 14" opacity=".4"/></svg>
    <svg class="size-5" viewBox="0 0 20 20"><path d="M5 5.500h12.500v10h-15V10" fill="none" stroke="currentColor" stroke-width="1.500"/><path d="M6 7.500h9.500V14H4.500v-3z" fill="currentColor"/><path d="M18.500 8.500h1.500v4h-1.500zM3 0 .5 5.500h2L1.500 9 6 3.500H3.800L5 0z" fill="currentColor"/></svg>
  </button>
  <button class="ml-5 w-[70px] text-right"><span class="whitespace-nowrap">20:51<br>5/24/2025</span></button>
</footer>
</body>
</html>
